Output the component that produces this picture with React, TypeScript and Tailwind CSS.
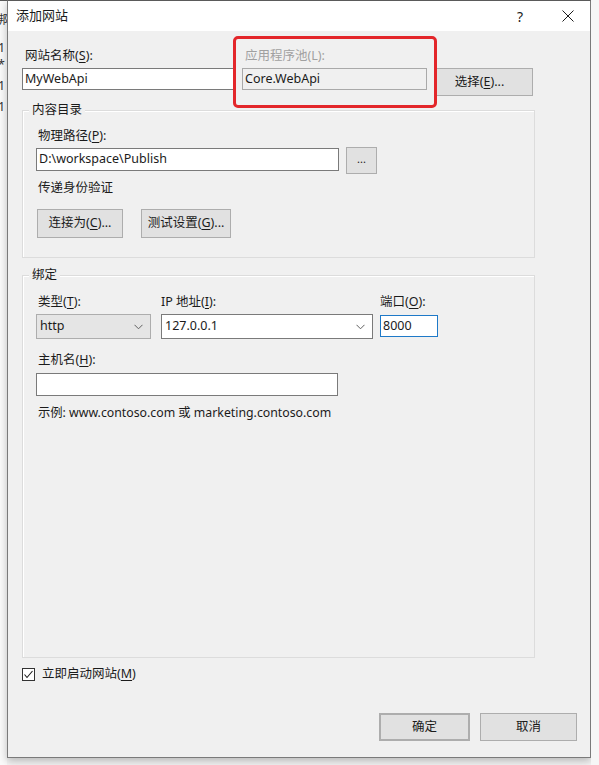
import React from "react";

const font = "font-['Noto_Sans','Noto_Sans_CJK_SC',sans-serif]";

function Key({ k }: { k: string }) {
  return <span className="underline underline-offset-2">{k}</span>;
}

function Label({ children, className = "" }: { children: React.ReactNode; className?: string }) {
  return <div className={`h-[16px] leading-[16px] whitespace-nowrap ${className}`}>{children}</div>;
}

function Btn({ children, className = "" }: { children: React.ReactNode; className?: string }) {
  return (
    <div className={`flex items-center justify-center bg-[#e1e1e1] border border-[#adadad] ${className}`}>
      {children}
    </div>
  );
}

function Chevron() {
  return (
    <svg width="9" height="6" viewBox="0 0 9 6" className="shrink-0">
      <polyline points="0.5,0.8 4.5,4.8 8.5,0.8" fill="none" stroke="#606060" strokeWidth="1" />
    </svg>
  );
}

function GroupBox({ title, className = "", children }: { title: string; className?: string; children: React.ReactNode }) {
  return (
    <div className={`w-[513px] border border-[#dcdcdc] shadow-[inset_1px_1px_0_#ffffff] ${className}`}>
      <div className="-mt-[9px] ml-[6px] w-fit px-[3px] bg-[#f0f0f0] h-[16px] leading-[16px]">{title}</div>
      {children}
    </div>
  );
}

export default function App() {
  return (
    <div className={`${font} text-[12.5px] text-[#1b1b1b] w-[599px] h-[765px] overflow-hidden bg-[#f4f4f4] flex`}>
      {/* window behind, cut off */}
      <div className="w-[7px] h-[765px] bg-[#fafafa] border-t border-[#5a5a5a] overflow-hidden flex flex-col text-[#333]">
        <div className="-ml-[5px] mt-[11px] leading-[16px]">绑</div>
        <div className="-ml-[2px] mt-[13px] leading-[14px]">1</div>
        <div className="-ml-[2px] mt-[3px] leading-[14px]">*</div>
        <div className="-ml-[2px] mt-[7px] leading-[14px]">1</div>
        <div className="-ml-[2px] mt-[7px] leading-[14px]">1</div>
      </div>

      {/* dialog */}
      <div className="w-[584px] h-[758px] flex flex-col border-x border-b border-t border-[#7a7a7a] border-t-[#5a5a5a] shadow-[0_3px_8px_rgba(0,0,0,0.25)]">
        {/* title bar */}
        <div className="h-[30px] bg-white flex items-center pl-[8px]">
          <span className="text-[13px]">添加网站</span>
          <span className="ml-auto text-[14px] mr-[39px]">?</span>
          <svg width="12" height="12" viewBox="0 0 12 12" className="mr-[16px]">
            <path d="M0.5 0.5 L11.5 11.5 M11.5 0.5 L0.5 11.5" stroke="#1b1b1b" strokeWidth="1" />
          </svg>
        </div>

        {/* body */}
        <div className="flex-1 bg-[#f0f0f0] pl-[14px] flex flex-col">
          {/* row 1 */}
          <div className="mt-[5px] flex items-start">
            <div className="w-[211px] pt-[12px]">
              <Label className="ml-[3px]">
                网站名称(<Key k="S" />):
              </Label>
              <div className="mt-[4px] h-[22px] bg-white border-y border-l border-[#7a7a7a] pl-[2px] flex items-center">
                MyWebApi
              </div>
            </div>
            <div className="w-[204px] h-[72px] border-[3px] border-[#e3262a] rounded-[5px] pt-[9px] pl-[6px]">
              <Label className="ml-[3px] text-[#a0a0a0]">应用程序池(L):</Label>
              <div className="mt-[4px] w-[185px] h-[22px] border border-[#a9a9a9] bg-[#f0f0f0] pl-[2px] flex items-center">
                Core.WebApi
              </div>
            </div>
            <Btn className="mt-[32px] w-[96px] h-[28px] border-l-0 pr-[10px]">
              选择(<Key k="E" />)...
            </Btn>
          </div>

          {/* 内容目录 */}
          <GroupBox title="内容目录" className="mt-[2px] h-[148px]">
            <div className="pl-[13px] flex flex-col">
              <Label className="mt-[10px] ml-[2px]">
                物理路径(<Key k="P" />):
              </Label>
              <div className="mt-[3px] flex items-start">
                <div className="mt-[1px] w-[303px] h-[23px] bg-white border border-[#7a7a7a] pl-[2px] flex items-center">
                  D:\workspace\Publish
                </div>
                <Btn className="ml-[7px] w-[31px] h-[27px] text-[11px] pb-[3px]">...</Btn>
              </div>
              <Label className="mt-[6px] ml-[2px]">传递身份验证</Label>
              <div className="mt-[13px] flex">
                <Btn className="ml-[1px] w-[86px] h-[29px]">
                  连接为(<Key k="C" />)...
                </Btn>
                <Btn className="ml-[18px] w-[90px] h-[29px]">
                  测试设置(<Key k="G" />)...
                </Btn>
              </div>
            </div>
          </GroupBox>

          {/* 绑定 */}
          <GroupBox title="绑定" className="mt-[17px] h-[383px]">
            <div className="pl-[13px] flex flex-col">
              <div className="mt-[11px] flex items-start">
                <div className="w-[115px]">
                  <Label className="ml-[2px]">
                    类型(<Key k="T" />):
                  </Label>
                  <div className="mt-[4px] h-[25px] bg-[#e5e5e5] border border-[#adadad] pl-[3px] pr-[7px] flex items-center justify-between">
                    <span>http</span>
                    <Chevron />
                  </div>
                </div>
                <div className="ml-[10px] w-[212px]">
                  <Label>
                    IP 地址(<Key k="I" />):
                  </Label>
                  <div className="mt-[4px] h-[25px] bg-white border border-[#7a7a7a] pl-[3px] pr-[7px] flex items-center justify-between">
                    <span>127.0.0.1</span>
                    <Chevron />
                  </div>
                </div>
                <div className="ml-[7px] w-[58px]">
                  <Label>
                    端口(<Key k="O" />):
                  </Label>
                  <div className="mt-[5px] h-[22px] bg-white border border-[#1e79c8] pl-[2px] flex items-center">
                    8000
                  </div>
                </div>
              </div>
              <Label className="mt-[13px] ml-[2px]">
                主机名(<Key k="H" />):
              </Label>
              <div className="mt-[5px] w-[302px] h-[23px] bg-white border border-[#7a7a7a]" />
              <Label className="mt-[9px] ml-[2px] text-[12.3px]">示例: www.contoso.com 或 marketing.contoso.com</Label>
            </div>
          </GroupBox>

          {/* checkbox */}
          <div className="mt-[8px] h-[16px] flex items-center">
            <div className="w-[13px] h-[13px] border border-[#333] bg-white flex items-center justify-center">
              <svg width="11" height="11" viewBox="0 0 11 11">
                <polyline points="1.5,5.5 4,8.5 9.5,2" fill="none" stroke="#1b1b1b" strokeWidth="1.1" />
              </svg>
            </div>
            <span className="ml-[7px] leading-[16px]">
              立即启动网站(<Key k="M" />)
            </span>
          </div>

          {/* buttons */}
          <div className="mt-[31px] mr-[13px] flex justify-end">
            <Btn className="w-[91px] h-[28px] border-2 border-[#0078d7]">确定</Btn>
            <Btn className="ml-[10px] w-[97px] h-[28px]">取消</Btn>
          </div>
        </div>
      </div>

      <div className="w-[8px] h-[765px] bg-[#f6f6f6]" />
    </div>
  );
}
